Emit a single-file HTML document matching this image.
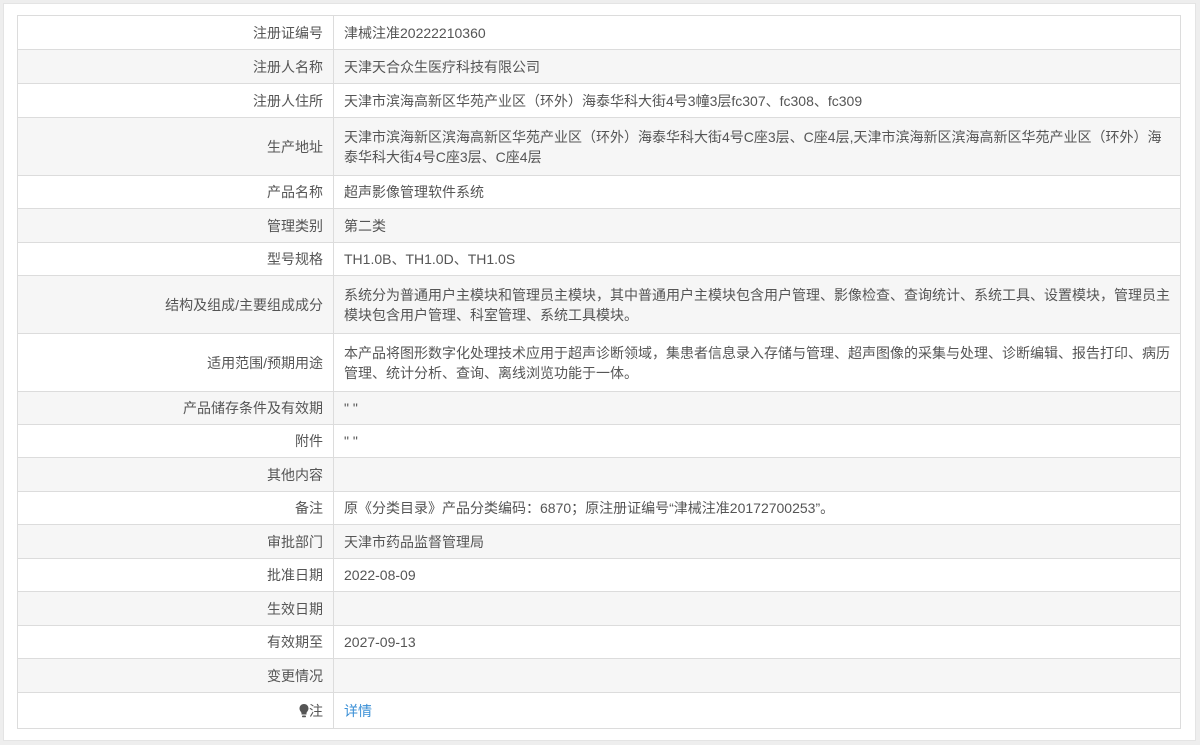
<!DOCTYPE html>
<html><head><meta charset="utf-8"><style>
body{margin:0;background:#eeeeee;width:1200px;height:745px;overflow:hidden;font-family:"Liberation Sans","Noto Sans CJK SC",sans-serif;}
.panel{position:absolute;left:3px;top:3px;width:1193px;height:738px;background:#fff;border:1px solid #e4e4e4;box-sizing:border-box;}
table{position:absolute;left:17px;top:15px;width:1164px;border-collapse:collapse;font-size:14px;color:#555;}
td{border:1px solid #dcdcdc;padding:0 10px;line-height:20px;white-space:nowrap;}
td.l{width:296px;text-align:right;}
tr:nth-child(even){background:#f6f6f6;}
a{color:#3a8fd6;text-decoration:none;}
</style></head><body>
<div class="panel"></div>
<table>
<tr style="height:34px"><td class="l">注册证编号</td><td>津械注准20222210360</td></tr>
<tr style="height:34px"><td class="l">注册人名称</td><td>天津天合众生医疗科技有限公司</td></tr>
<tr style="height:34px"><td class="l">注册人住所</td><td>天津市滨海高新区华苑产业区（环外）海泰华科大街4号3幢3层fc307、fc308、fc309</td></tr>
<tr style="height:58px"><td class="l">生产地址</td><td>天津市滨海新区滨海高新区华苑产业区（环外）海泰华科大街4号C座3层、C座4层,天津市滨海新区滨海高新区华苑产业区（环外）海<br>泰华科大街4号C座3层、C座4层</td></tr>
<tr style="height:33px"><td class="l">产品名称</td><td>超声影像管理软件系统</td></tr>
<tr style="height:34px"><td class="l">管理类别</td><td>第二类</td></tr>
<tr style="height:33px"><td class="l">型号规格</td><td>TH1.0B、TH1.0D、TH1.0S</td></tr>
<tr style="height:58px"><td class="l">结构及组成/主要组成成分</td><td>系统分为普通用户主模块和管理员主模块，其中普通用户主模块包含用户管理、影像检查、查询统计、系统工具、设置模块，管理员主<br>模块包含用户管理、科室管理、系统工具模块。</td></tr>
<tr style="height:58px"><td class="l">适用范围/预期用途</td><td>本产品将图形数字化处理技术应用于超声诊断领域，集患者信息录入存储与管理、超声图像的采集与处理、诊断编辑、报告打印、病历<br>管理、统计分析、查询、离线浏览功能于一体。</td></tr>
<tr style="height:33px"><td class="l">产品储存条件及有效期</td><td>" "</td></tr>
<tr style="height:33px"><td class="l">附件</td><td>" "</td></tr>
<tr style="height:34px"><td class="l">其他内容</td><td></td></tr>
<tr style="height:33px"><td class="l">备注</td><td>原《分类目录》产品分类编码：6870；原注册证编号“津械注准20172700253”。</td></tr>
<tr style="height:34px"><td class="l">审批部门</td><td>天津市药品监督管理局</td></tr>
<tr style="height:33px"><td class="l">批准日期</td><td>2022-08-09</td></tr>
<tr style="height:34px"><td class="l">生效日期</td><td></td></tr>
<tr style="height:33px"><td class="l">有效期至</td><td>2027-09-13</td></tr>
<tr style="height:34px"><td class="l">变更情况</td><td></td></tr>
<tr style="height:36px"><td class="l"><svg width="10" height="14" viewBox="0 0 10 14" style="vertical-align:-2px"><path d="M5 0C2.2 0 0.5 2 0.5 4.5c0 2 1.5 3.2 2 4.5v1.5h5V9c0.5-1.3 2-2.5 2-4.5C9.5 2 7.8 0 5 0z" fill="#555"/><rect x="3" y="11.5" width="4" height="1.8" rx="0.8" fill="#555"/></svg>注</td><td><a>详情</a></td></tr>
</table>
</body></html>
